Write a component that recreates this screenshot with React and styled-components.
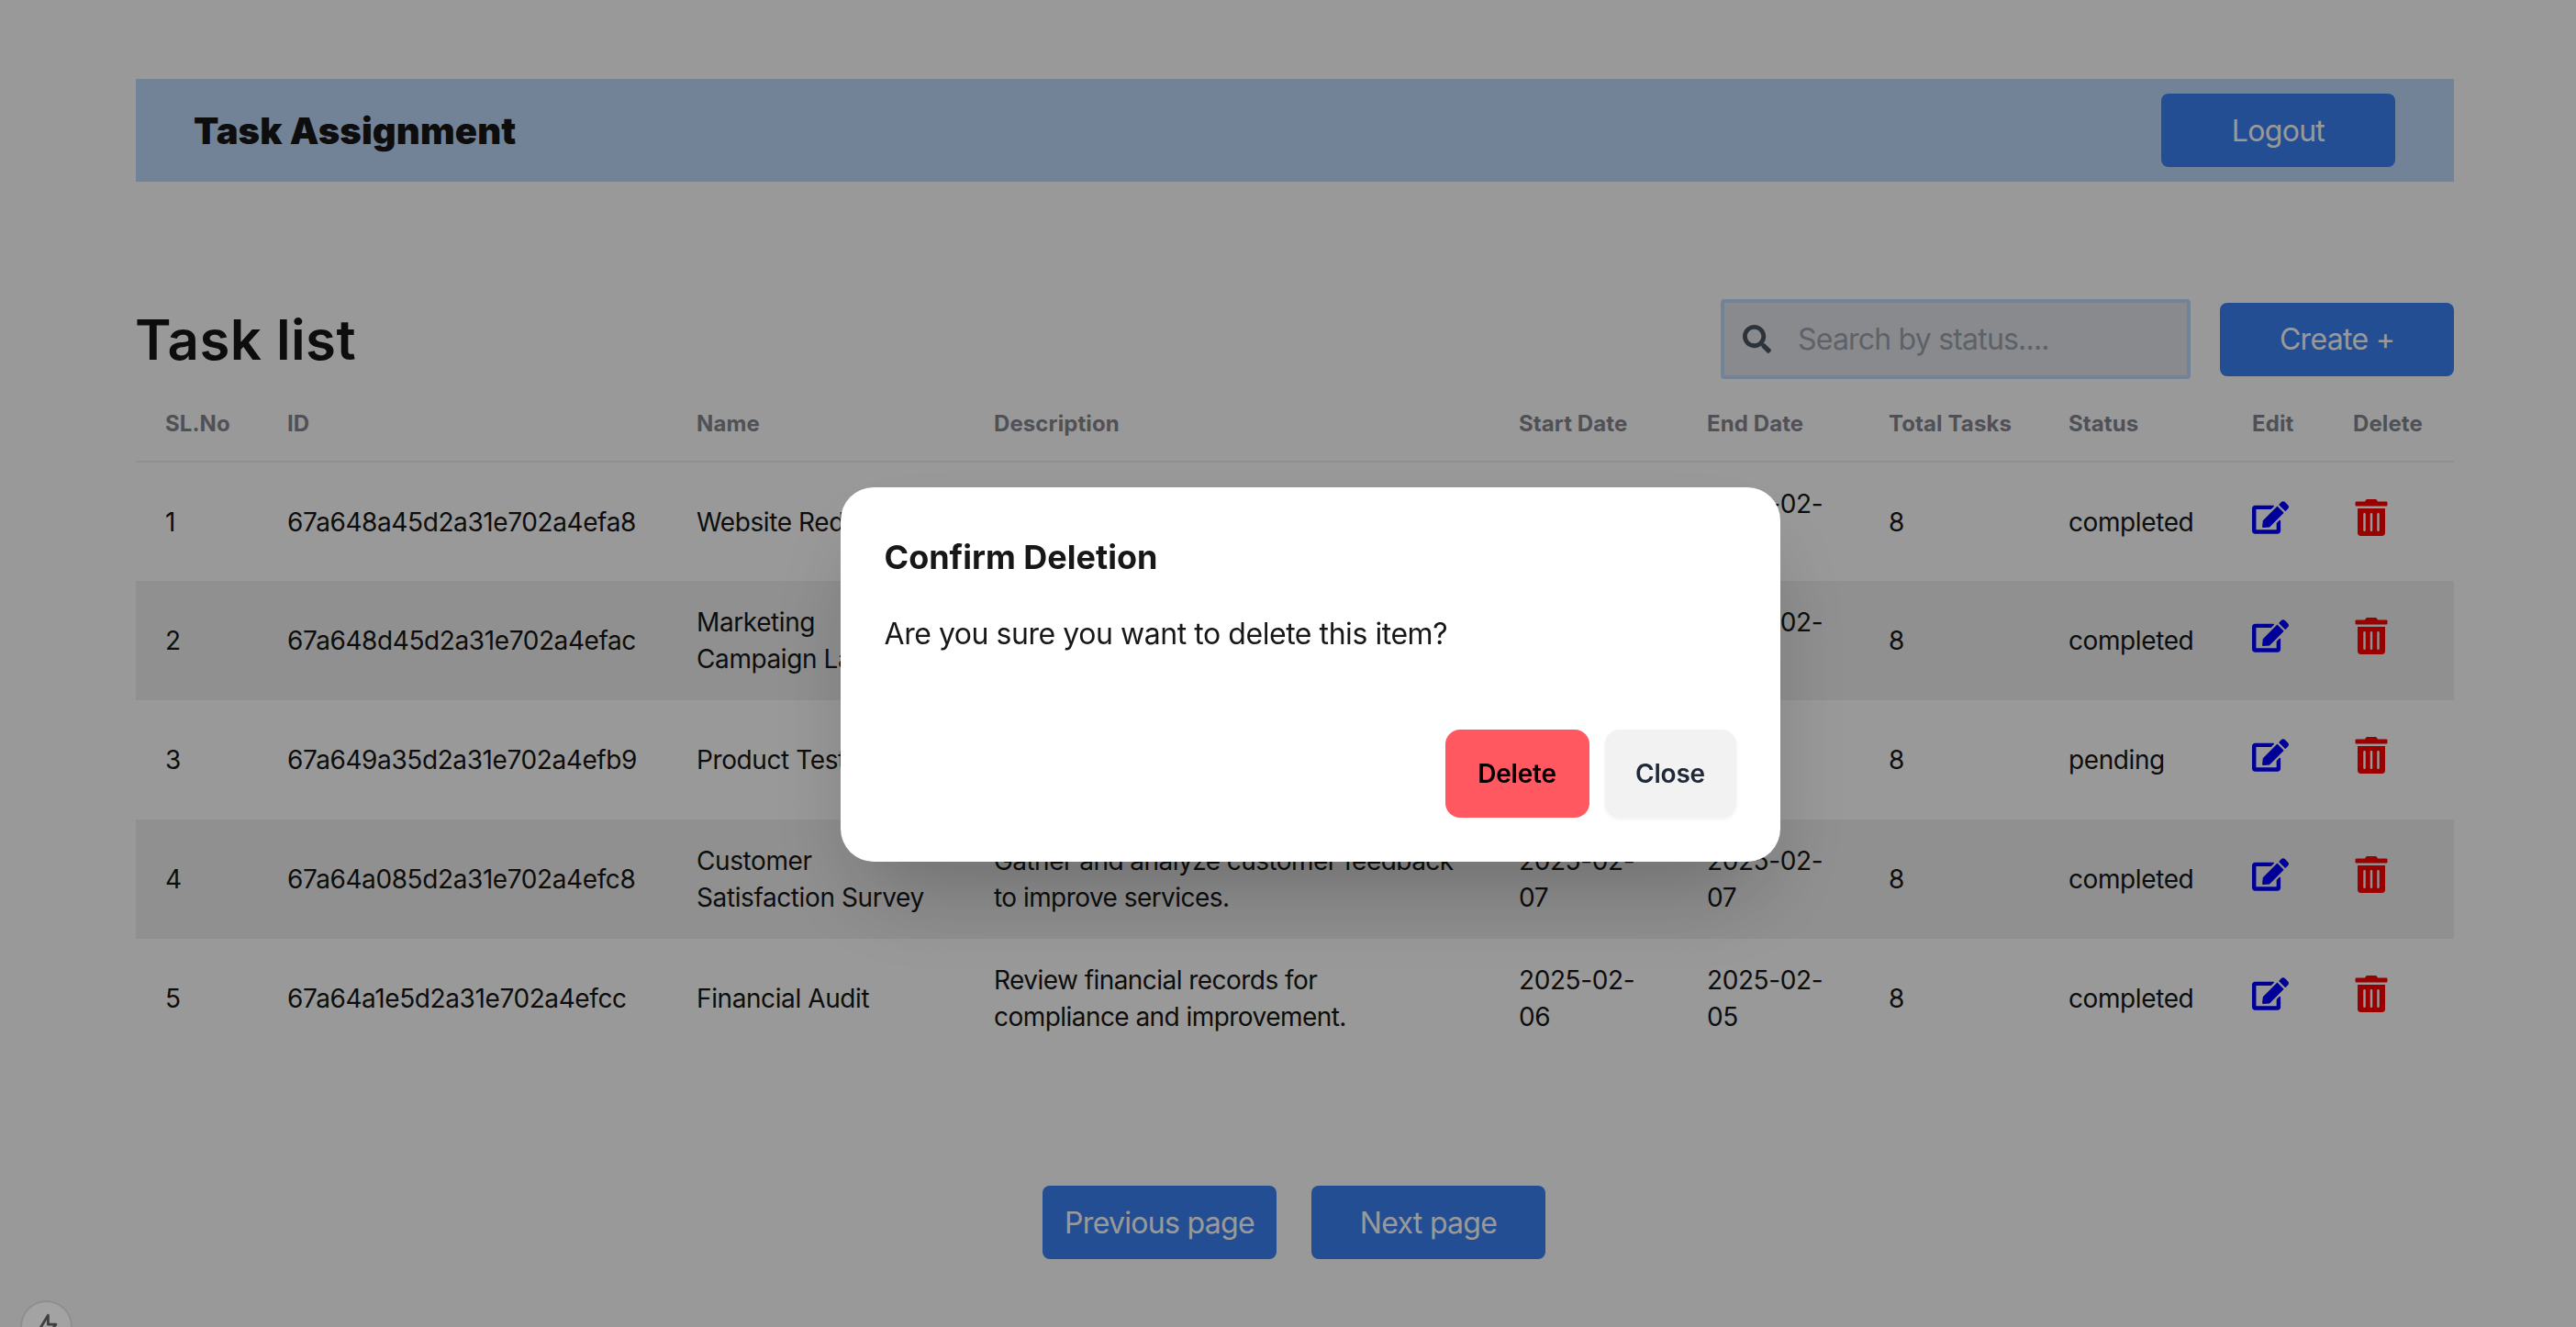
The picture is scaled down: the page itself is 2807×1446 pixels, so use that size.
import React from "react";
import styled, { createGlobalStyle } from "styled-components";
import { FaEdit, FaTrashAlt, FaSearch } from "react-icons/fa";

const tasks = [
  {
    id: "67a648a45d2a31e702a4efa8",
    name: "Website Redesign",
    description: "Revamp the company website with a modern look.",
    start: "2025-02-10",
    end: "2025-02-20",
    status: "completed",
  },
  {
    id: "67a648d45d2a31e702a4efac",
    name: "Marketing Campaign Launch",
    description: "Plan and launch the new marketing campaign.",
    start: "2025-02-12",
    end: "2025-02-25",
    status: "completed",
  },
  {
    id: "67a649a35d2a31e702a4efb9",
    name: "Product Testing",
    description: "Test the new product.",
    start: "2025",
    end: "2025",
    status: "pending",
  },
  {
    id: "67a64a085d2a31e702a4efc8",
    name: "Customer Satisfaction Survey",
    description: "Gather and analyze customer feedback to improve services.",
    start: "2025-02-07",
    end: "2025-02-07",
    status: "completed",
  },
  {
    id: "67a64a1e5d2a31e702a4efcc",
    name: "Financial Audit",
    description: "Review financial records for compliance and improvement.",
    start: "2025-02-06",
    end: "2025-02-05",
    status: "completed",
  },
];

const columns = [
  ["SL.No", 133],
  ["ID", 446],
  ["Name", 324],
  ["Description", 572],
  ["Start Date", 205],
  ["End Date", 198],
  ["Total Tasks", 196],
  ["Status", 200],
  ["Edit", 110],
  ["Delete", 142],
];

const App = () => {
  return (
    <>
      <GlobalStyle />
      <Page>
        <Header>
          <Brand>Task Assignment</Brand>
          <PrimaryButton>Logout</PrimaryButton>
        </Header>

        <TitleRow>
          <Title>Task list</Title>
          <Tools>
            <SearchBox>
              <FaSearch size={31} color="#4b5563" />
              <SearchInput placeholder="Search by status...." />
            </SearchBox>
            <PrimaryButton>Create +</PrimaryButton>
          </Tools>
        </TitleRow>

        <Table>
          <colgroup>
            {columns.map(([label, width]) => (
              <Col key={label} $width={width} />
            ))}
          </colgroup>
          <thead>
            <tr>
              {columns.map(([label]) => (
                <Th key={label}>{label}</Th>
              ))}
            </tr>
          </thead>
          <tbody>
            {tasks.map((task, i) => (
              <Row key={task.id} $striped={i % 2 === 1}>
                <Td>{i + 1}</Td>
                <Td>{task.id}</Td>
                <Td>{task.name}</Td>
                <DescriptionCell>{task.description}</DescriptionCell>
                <Td>{task.start}</Td>
                <Td>{task.end}</Td>
                <Td>8</Td>
                <Td>{task.status}</Td>
                <Td>
                  <IconButton $color="#0000ff">
                    <FaEdit size={40} />
                  </IconButton>
                </Td>
                <Td>
                  <IconButton $color="#ff0000">
                    <FaTrashAlt size={40} />
                  </IconButton>
                </Td>
              </Row>
            ))}
          </tbody>
        </Table>

        <Pagination>
          <PrimaryButton>Previous page</PrimaryButton>
          <PrimaryButton>Next page</PrimaryButton>
        </Pagination>
      </Page>

      <Overlay>
        <ModalBox>
          <ModalTitle>Confirm Deletion</ModalTitle>
          <ModalText>Are you sure you want to delete this item?</ModalText>
          <ModalActions>
            <DeleteButton>Delete</DeleteButton>
            <CloseButton>Close</CloseButton>
          </ModalActions>
        </ModalBox>
      </Overlay>

      <Widget>
        <svg width="34" height="34" viewBox="0 0 24 24" fill="none" stroke="#3f3f3f" strokeWidth="2" strokeLinejoin="round">
          <path d="M13 3 5 16h6l-1 6 9-12h-6z" />
        </svg>
      </Widget>
    </>
  );
};

const GlobalStyle = createGlobalStyle`
  * {
    box-sizing: border-box;
  }
  html,
  body {
    margin: 0;
    background: #ffffff;
    overflow: hidden;
    font-family: "Inter", "Liberation Sans", sans-serif;
    color: #171717;
  }
`;

const Page = styled.div`
  padding: 86px 133px 0 148px;
  height: 1446px;
`;

const Header = styled.header`
  height: 112px;
  padding: 0 64px;
  background: #bfdbfe;
  display: flex;
  align-items: center;
  justify-content: space-between;
`;

const Brand = styled.h1`
  margin: 0 0 0 -1px;
  font-size: 40px;
  font-weight: 900;
  letter-spacing: 0.1px;
`;

const PrimaryButton = styled.button`
  width: 255px;
  height: 80px;
  border: 0;
  border-radius: 8px;
  background: #3b82f6;
  color: #ffffff;
  font-family: inherit;
  font-size: 32px;
  letter-spacing: -0.7px;
`;

const TitleRow = styled.div`
  margin-top: 128px;
  display: flex;
  align-items: center;
  justify-content: space-between;
`;

const Title = styled.h2`
  margin: 0 0 0 -1px;
  font-size: 60px;
  font-weight: 600;
  letter-spacing: 0.4px;
`;

const Tools = styled.div`
  display: flex;
  align-items: center;
  gap: 32px;
`;

const SearchBox = styled.label`
  width: 512px;
  height: 87px;
  padding: 0 20px;
  display: flex;
  align-items: center;
  gap: 27px;
  background: #e5e7eb;
  border: 4px solid #bfdbfe;
  border-radius: 4px;
`;

const SearchInput = styled.input`
  flex: 1;
  min-width: 0;
  border: 0;
  outline: 0;
  background: transparent;
  font-family: inherit;
  font-size: 32px;
  letter-spacing: -0.8px;
  color: #171717;

  &::placeholder {
    color: #9ca3af;
    opacity: 1;
  }
`;

const Table = styled.table`
  width: 100%;
  margin-top: 8px;
  border-collapse: collapse;
  table-layout: fixed;
`;

const Col = styled.col`
  width: ${(p) => p.$width}px;
`;

const Th = styled.th`
  height: 82px;
  padding: 0 32px;
  text-align: left;
  white-space: nowrap;
  font-size: 24px;
  font-weight: 700;
  letter-spacing: 0.1px;
  color: #858890;
  border-bottom: 2px solid #eeeeee;
`;

const Row = styled.tr`
  height: 130px;
  background: ${(p) => (p.$striped ? "#f0f0f0" : "transparent")};
`;

const Td = styled.td`
  padding: 0 32px;
  font-size: 28px;
  line-height: 40px;
  letter-spacing: -0.4px;
`;

const DescriptionCell = styled(Td)`
  padding-right: 35px;
  letter-spacing: -0.55px;
`;

const IconButton = styled.span`
  display: inline-flex;
  margin-top: -14px;
  color: ${(p) => p.$color};
  vertical-align: middle;
`;

const Pagination = styled.div`
  margin-top: 139px;
  padding-right: 2px;
  display: flex;
  justify-content: center;
  gap: 38px;
`;

const Overlay = styled.div`
  position: fixed;
  inset: 0;
  padding: 24px 0 0 48px;
  display: flex;
  align-items: center;
  justify-content: center;
  background: rgba(0, 0, 0, 0.4);
`;

const ModalBox = styled.div`
  width: 1024px;
  height: 408px;
  padding: 48px;
  display: flex;
  flex-direction: column;
  border-radius: 36px;
  background: #ffffff;
  box-shadow: 0 50px 100px -24px rgba(0, 0, 0, 0.25);
`;

const ModalTitle = styled.h3`
  margin: 0;
  font-size: 36px;
  line-height: 56px;
  font-weight: 700;
  letter-spacing: 0;
`;

const ModalText = styled.p`
  margin: 32px 0 0;
  font-size: 32px;
  line-height: 48px;
  letter-spacing: -0.45px;
`;

const ModalActions = styled.div`
  margin-top: auto;
  display: flex;
  justify-content: flex-end;
  gap: 17px;
`;

const DeleteButton = styled.button`
  width: 157px;
  height: 96px;
  border: 0;
  border-radius: 16px;
  background: #ff5861;
  color: #000000;
  font-family: inherit;
  font-size: 28px;
  font-weight: 600;
  letter-spacing: -0.2px;
`;

const CloseButton = styled(DeleteButton)`
  width: 143px;
  background: #f2f2f2;
  color: #1f2937;
  box-shadow: 0 2px 4px rgba(0, 0, 0, 0.06);
`;

const Widget = styled.div`
  position: fixed;
  left: 22px;
  top: 1417px;
  width: 57px;
  height: 57px;
  display: flex;
  align-items: center;
  justify-content: center;
  border-radius: 50%;
  background: #a3a3a3;
  border: 2px solid #8f8f8f;
`;

export default App;
